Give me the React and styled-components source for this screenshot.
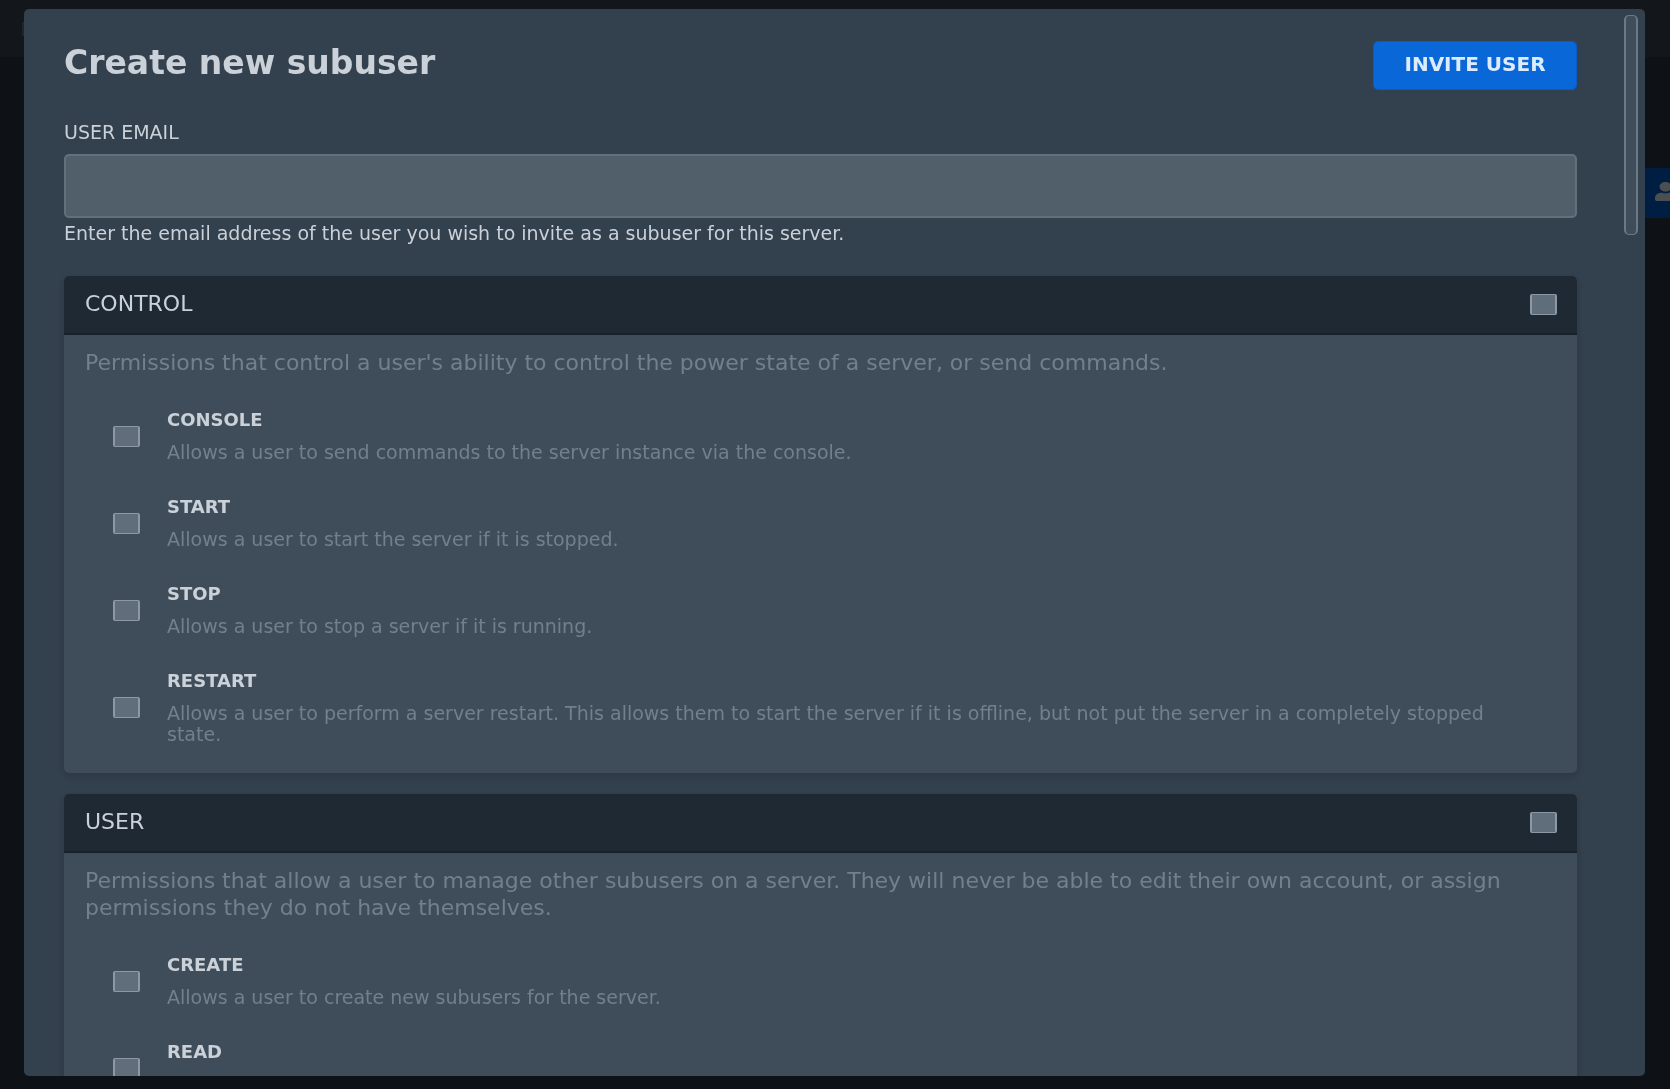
import styled, { createGlobalStyle } from "styled-components";
import { FaUserPlus } from "react-icons/fa";

const groups = [
  {
    name: "control",
    description: "Permissions that control a user's ability to control the power state of a server, or send commands.",
    permissions: [
      { name: "console", text: "Allows a user to send commands to the server instance via the console." },
      { name: "start", text: "Allows a user to start the server if it is stopped." },
      { name: "stop", text: "Allows a user to stop a server if it is running." },
      {
        name: "restart",
        text: "Allows a user to perform a server restart. This allows them to start the server if it is offline, but not put the server in a completely stopped state.",
      },
    ],
  },
  {
    name: "user",
    description:
      "Permissions that allow a user to manage other subusers on a server. They will never be able to edit their own account, or assign permissions they do not have themselves.",
    permissions: [
      { name: "create", text: "Allows a user to create new subusers for the server." },
      { name: "read", text: "" },
    ],
  },
];

function PermissionGroup({ group }) {
  return (
    <Card>
      <CardHeader>
        <CardTitle htmlFor={group.name}>{group.name}</CardTitle>
        <Checkbox id={group.name} />
      </CardHeader>
      <CardBody>
        <CardText>{group.description}</CardText>
        {group.permissions.map((p) => (
          <PermissionRow key={p.name} htmlFor={`${group.name}.${p.name}`}>
            <Checkbox id={`${group.name}.${p.name}`} />
            <div>
              <PermissionName>{p.name}</PermissionName>
              <PermissionText>{p.text}</PermissionText>
            </div>
          </PermissionRow>
        ))}
      </CardBody>
    </Card>
  );
}

export default function App() {
  return (
    <>
      <GlobalStyle />
      <Page>
        <NavBar>
          <NavMark />
        </NavBar>
        <PageActions>
          <NewUserButton type="button" aria-label="New user">
            <FaUserPlus preserveAspectRatio="none" />
          </NewUserButton>
        </PageActions>
      </Page>
      <Overlay>
        <Modal role="dialog" aria-labelledby="modal-title">
          <Content>
            <ModalHeader>
              <Title id="modal-title">Create new subuser</Title>
              <InviteButton type="submit">Invite User</InviteButton>
            </ModalHeader>
            <EmailLabel htmlFor="email">User Email</EmailLabel>
            <EmailInput id="email" type="email" />
            <HelpText>Enter the email address of the user you wish to invite as a subuser for this server.</HelpText>
            <Groups>
              {groups.map((g) => (
                <PermissionGroup key={g.name} group={g} />
              ))}
            </Groups>
          </Content>
          <ScrollTrack>
            <ScrollThumb />
          </ScrollTrack>
        </Modal>
      </Overlay>
    </>
  );
}

const GlobalStyle = createGlobalStyle`
  * {
    box-sizing: border-box;
  }
  body {
    margin: 0;
    overflow: hidden;
    background-color: #0e1216;
    font-family: "DejaVu Sans", sans-serif;
  }
  h1, p {
    margin: 0;
  }
`;

const Page = styled.div`
  height: 100vh;
  overflow: hidden;
`;
const NavBar = styled.nav`
  display: flex;
  align-items: center;
  height: 57px;
  padding: 0 22px;
  background-color: #13171b;
`;
const NavMark = styled.div`
  width: 40px;
  height: 14px;
  background-color: #1d262e;
`;
const PageActions = styled.div`
  display: flex;
  justify-content: flex-end;
  padding-top: 111px;
`;
const NewUserButton = styled.button`
  flex-shrink: 0;
  width: 72px;
  height: 50px;
  margin-right: -28px;
  padding: 0 0 3px 29px;
  border: 0;
  background-color: #001e41;
  color: #4a4f52;

  svg {
    display: block;
    width: 30px;
    height: 19px;
  }
`;
const Overlay = styled.div`
  position: fixed;
  inset: 0;
  display: flex;
  padding: 9px 25px 13px 24px;
`;
const Modal = styled.div`
  flex: 1;
  display: flex;
  min-width: 0;
  border-radius: 5px;
  overflow: hidden;
  background-color: #33404d;
`;
const Content = styled.form`
  flex: 1;
  min-width: 0;
  padding: 32px 47px 0 40px;
`;
const ScrollTrack = styled.div`
  width: 21px;
  padding: 6px 7px 0 0;
`;
const ScrollThumb = styled.div`
  height: 220px;
  border: solid #6b7985;
  border-width: 1px 2px;
  border-radius: 5px;
  background-color: #3f4d5a;
`;
const ModalHeader = styled.div`
  display: flex;
  justify-content: space-between;
  align-items: flex-start;
`;
const Title = styled.h1`
  font-size: 33px;
  line-height: 43px;
  font-weight: 700;
  color: #cad1d8;
`;
const InviteButton = styled.button`
  width: 204px;
  height: 49px;
  padding: 0 0 4px;
  border: 1px solid #0a5bc4;
  border-radius: 5px;
  background-color: #0967d8;
  color: #dcecfd;
  font-family: inherit;
  font-size: 20px;
  font-weight: 700;
  text-transform: uppercase;
`;
const EmailLabel = styled.label`
  display: block;
  margin: 32px 0 12px;
  font-size: 19px;
  line-height: 20px;
  text-transform: uppercase;
  color: #cad1d8;
`;
const EmailInput = styled.input`
  display: block;
  width: 100%;
  height: 64px;
  padding: 0 16px;
  border: 2px solid #62707c;
  border-radius: 5px;
  background-color: #515f6b;
  color: #cad1d8;
  font: inherit;
`;
const HelpText = styled.p`
  margin-top: 5px;
  font-size: 19px;
  line-height: 20px;
  color: #cad1d8;
`;
const Groups = styled.div`
  display: flex;
  flex-direction: column;
  gap: 21px;
  margin-top: 33px;
`;
const Card = styled.section`
  border-radius: 5px;
  background-color: #3f4d5a;
  box-shadow: 0 3px 6px rgba(0, 0, 0, 0.14);
`;
const CardHeader = styled.div`
  display: flex;
  justify-content: space-between;
  align-items: center;
  height: 59px;
  padding: 0 20px 0 21px;
  border-bottom: 2px solid #18212a;
  border-radius: 5px 5px 0 0;
  background-color: #1f2933;
`;
const CardTitle = styled.label`
  padding-bottom: 2px;
  font-size: 22px;
  line-height: 27px;
  text-transform: uppercase;
  color: #cad1d8;
`;
const CardBody = styled.div`
  padding: 14px 21px 11px;
`;
const CardText = styled.p`
  margin-bottom: 17px;
  font-size: 22px;
  line-height: 27px;
  color: #71808c;
`;
const PermissionRow = styled.label`
  display: flex;
  align-items: center;
  gap: 27px;
  padding: 16px 28px 17px;
`;
const PermissionName = styled.p`
  margin-bottom: 12px;
  font-size: 18px;
  line-height: 21px;
  font-weight: 700;
  text-transform: uppercase;
  color: #cad1d8;
`;
const PermissionText = styled.p`
  min-height: 21px;
  font-size: 19px;
  line-height: 21px;
  color: #71808c;
`;
const Checkbox = styled.input.attrs({ type: "checkbox" })`
  appearance: none;
  flex-shrink: 0;
  width: 27px;
  height: 21px;
  margin: 0;
  border: solid #8c99a5;
  border-width: 1px 2px;
  border-radius: 2px;
  background-color: #606d7a;
`;
